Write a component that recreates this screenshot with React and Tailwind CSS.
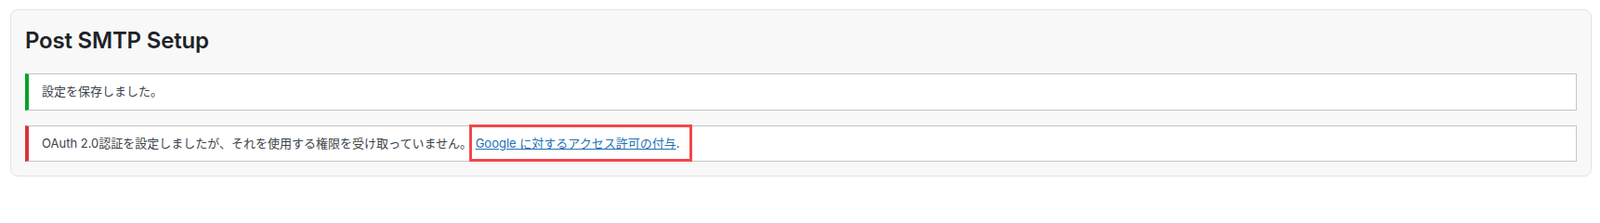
import React from 'react';

const font = { fontFamily: 'Inter, "Noto Sans CJK JP", sans-serif' };

function Notice({ tone, children }) {
  const edge = tone === 'error' ? 'border-l-[#d63638]' : 'border-l-[#00a32a]';
  return (
    <div className={`bg-white border border-[#c3c4c7] border-l-4 ${edge} px-3 py-px`}>
      <p className="my-[6px] p-[2px] text-[13px] leading-[1.5] text-[#3c434a]">{children}</p>
    </div>
  );
}

export default function App() {
  return (
    <div className="w-[1722px] h-[202px] bg-white pt-[10px] pl-[11px] pr-[9px]" style={font}>
      <div className="bg-[#f8f8f8] border border-[#e3e3e3] rounded-[8px] px-[15px] pt-[17px] pb-[15px]">
        <h1 className="text-[24px] leading-[32px] font-semibold text-[#1d2327] tracking-[-0.2px]">Post SMTP Setup</h1>

        <div className="mt-[19px] flex flex-col gap-4">
          <Notice tone="success">設定を保存しました。</Notice>
          <Notice tone="error">
            OAuth 2.0認証を設定しましたが、それを使用する権限を受け取っていません。{' '}
            <span className="relative">
              <a href="#" className="text-[#2271b1] underline">Google に対するアクセス許可の付与</a>.
              <span className="absolute -left-[7px] -right-[14px] -top-[12px] -bottom-[12px] border-[3px] border-[#f2474c] pointer-events-none" />
            </span>
          </Notice>
        </div>
      </div>
    </div>
  );
}
